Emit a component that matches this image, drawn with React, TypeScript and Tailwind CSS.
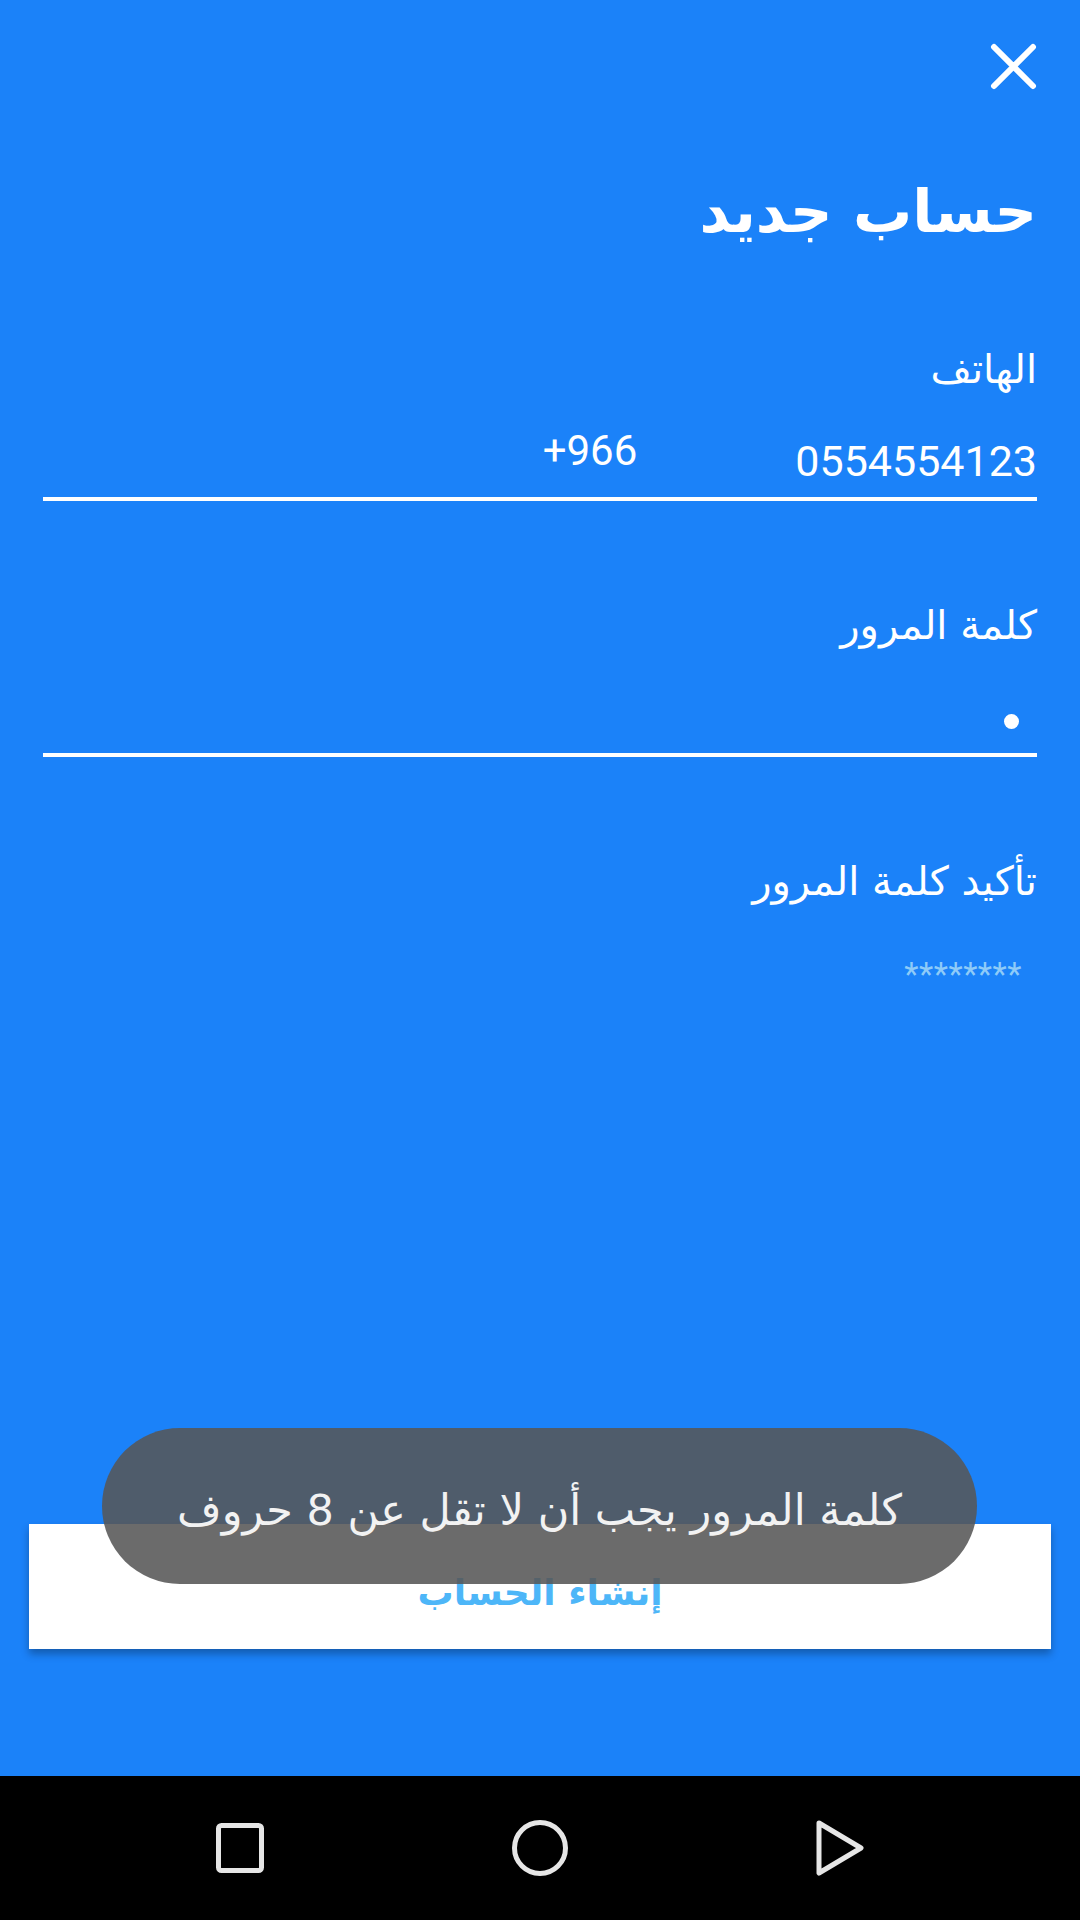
import * as React from "react";

const arabic = "font-['DejaVu_Sans',sans-serif]";
const digits = "font-['Roboto','Liberation_Sans',sans-serif]";

function Field({
  label,
  children,
  underline = true,
}: {
  label: string;
  children: React.ReactNode;
  underline?: boolean;
}) {
  return (
    <div className="flex flex-col">
      <label className={`${arabic} text-[40px] leading-[48px] text-white`}>{label}</label>
      <div className="h-[78px] mt-[26px] flex items-end pb-[14px]">{children}</div>
      <div className={underline ? "h-[4px] bg-white" : "h-[4px]"} />
    </div>
  );
}

export default function App() {
  return (
    <div className="relative w-[1080px] h-[1920px] flex flex-col bg-[#1b82f9] overflow-hidden">
      <main dir="rtl" className="flex-1 flex flex-col px-[43px]">
        {/* Close */}
        <div className="pt-[43px] flex">
          <button className="w-[47px] h-[47px]">
            <svg viewBox="0 0 47 47" className="w-[47px] h-[47px]">
              <path d="M4 4 L43 43 M43 4 L4 43" stroke="white" strokeWidth="6" strokeLinecap="round" />
            </svg>
          </button>
        </div>

        <h1 className={`${arabic} mt-[82px] text-[59px] leading-[80px] font-bold text-white`}>حساب جديد</h1>

        <div className="mt-[93px] flex flex-col gap-[100px]">
          <Field label="الهاتف">
            <div className="flex items-start gap-[158px]" dir="ltr">
              <span className={`${digits} text-[42px] leading-none text-white -mt-[10px]`}>+966</span>
              <span className={`${digits} text-[43px] leading-none text-white`}>0554554123</span>
            </div>
          </Field>

          <Field label="كلمة المرور">
            <div className="w-[15px] h-[15px] mr-[18px] mb-[10px] rounded-full bg-white" />
          </Field>

          <Field label="تأكيد كلمة المرور" underline={false}>
            <span className={`${digits} mr-[15px] mb-[4px] text-[33px] leading-none tracking-[0.5px] text-[#8ecbf8]`}>********</span>
          </Field>
        </div>

        {/* Submit */}
        <div className="mt-auto mb-[127px] -mx-[14px]">
          <button className="w-full h-[125px] pt-[12px] bg-white shadow-[0_5px_8px_rgba(0,0,0,0.3)] flex items-center justify-center">
            <span className={`${arabic} text-[36px] font-bold text-[#4db6f8]`}>إنشاء الحساب</span>
          </button>
        </div>
      </main>

      {/* Toast */}
      <div className="absolute left-[102px] top-[1428px] w-[875px] h-[156px] pt-[8px] rounded-full bg-[rgba(86,86,86,0.88)] flex items-center justify-center">
        <span dir="rtl" className={`${arabic} text-[43px] text-[#f2f2f2]`}>كلمة المرور يجب أن لا تقل عن 8 حروف</span>
      </div>

      {/* Android nav bar */}
      <nav className="h-[144px] bg-black flex items-center justify-center gap-[248px]">
        <svg viewBox="0 0 48 50" className="w-[48px] h-[50px]">
          <rect x="2.5" y="2.5" width="43" height="45" rx="3" fill="none" stroke="#e6e6e6" strokeWidth="5" />
        </svg>
        <svg viewBox="0 0 56 56" className="w-[56px] h-[56px]">
          <circle cx="28" cy="28" r="25.5" fill="none" stroke="#e6e6e6" strokeWidth="5" />
        </svg>
        <svg viewBox="0 0 48 56" className="w-[48px] h-[56px]">
          <path d="M3 3 L45 28 L3 53 Z" fill="none" stroke="#e6e6e6" strokeWidth="5" strokeLinejoin="round" />
        </svg>
      </nav>
    </div>
  );
}
